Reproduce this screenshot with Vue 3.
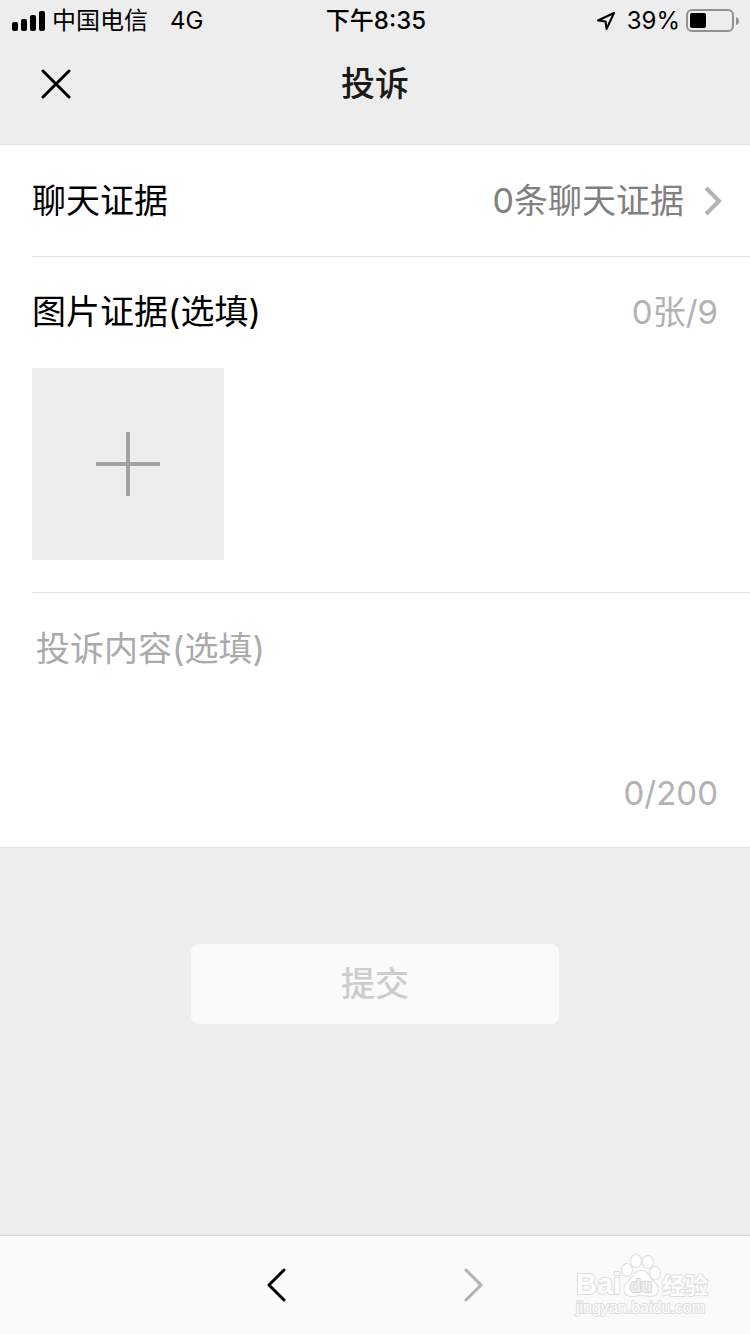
<script setup>
import { ref, computed } from 'vue'
const MAX_PHOTOS = 9, MAX_CHARS = 200
const chats = ref([]), photos = ref([]), content = ref('')
const canSubmit = computed(() => chats.value.length > 0 || photos.value.length > 0 || content.value.trim() !== '')
const battery = 39
function onPick(e){ photos.value = [...photos.value, ...e.target.files].slice(0, MAX_PHOTOS) }
</script>

<template>
  <div class="page">
    <header class="top">
      <div class="status">
        <div class="status-side">
          <svg class="signal" viewBox="0 0 34 20" aria-hidden="true">
            <rect x="0" y="11" width="6" height="9" rx="2"/>
            <rect x="9" y="8" width="6" height="12" rx="2"/>
            <rect x="18" y="4" width="6" height="16" rx="2"/>
            <rect x="27" y="0" width="6" height="20" rx="2"/>
          </svg>
          <span class="carrier">中国电信</span>
          <span>4G</span>
        </div>
        <div class="clock">下午8:35</div>
        <div class="status-side is-right">
          <svg class="locate" viewBox="0 0 20 20" fill="none" aria-hidden="true">
            <path d="M2 9.5L18 2L10.5 18L9.6 10.4Z" stroke="currentColor" stroke-width="2" stroke-linejoin="round"/>
          </svg>
          <span>{{ battery }}%</span>
          <svg class="battery" viewBox="0 0 54 24" aria-hidden="true">
            <rect x="1" y="1" width="46" height="21" rx="5" fill="none" stroke="#919191" stroke-width="2"/>
            <rect x="4" y="4" :width="Math.round(battery * 0.41)" height="15" rx="2"/>
            <path d="M50 8Q53 9 53 12Q53 15 50 16Z" fill="#919191"/>
          </svg>
        </div>
      </div>
      <div class="nav">
        <button class="icon-btn close" type="button" aria-label="关闭">
          <svg viewBox="0 0 30 30" fill="none"><path d="M2 2L28 28M28 2L2 28" stroke="currentColor" stroke-width="3" stroke-linecap="round"/></svg>
        </button>
        <h1 class="title">投诉</h1>
      </div>
    </header>

    <form id="complaint" class="form" @submit.prevent>
      <button class="cell" type="button">
        <span>聊天证据</span>
        <span class="cell-value">{{ chats.length }}条聊天证据
          <svg class="arrow" viewBox="0 0 18 30" fill="none" aria-hidden="true"><path d="M2 2L15 15L2 28" stroke="#b2b2b2" stroke-width="4"/></svg>
        </span>
      </button>

      <section class="photos">
        <div class="photos-head">
          <label for="photo">图片证据(选填)</label>
          <span class="count">{{ photos.length }}张/{{ MAX_PHOTOS }}</span>
        </div>
        <label class="adder">
          <input id="photo" class="file" type="file" accept="image/*" multiple @change="onPick">
          <svg viewBox="0 0 64 64" aria-hidden="true"><path d="M0 32H64M32 0V64" stroke="#a3a3a3" stroke-width="4"/></svg>
        </label>
      </section>

      <section class="content">
        <textarea v-model="content" class="textarea" aria-label="投诉内容" placeholder="投诉内容(选填)" :maxlength="MAX_CHARS" />
        <div class="count">{{ content.length }}/{{ MAX_CHARS }}</div>
      </section>
    </form>

    <div class="actions">
      <button class="submit" type="submit" form="complaint" :disabled="!canSubmit">提交</button>
    </div>

    <footer class="toolbar">
      <button class="icon-btn step" type="button" aria-label="后退">
        <svg viewBox="0 0 20 36" fill="none"><path d="M18 3L3 18L18 33" stroke="currentColor" stroke-width="3" stroke-linecap="round" stroke-linejoin="round"/></svg>
      </button>
      <button class="icon-btn step" type="button" aria-label="前进" disabled>
        <svg viewBox="0 0 20 36" fill="none"><path d="M2 3L17 18L2 33" stroke="currentColor" stroke-width="3" stroke-linecap="round" stroke-linejoin="round"/></svg>
      </button>
      <div class="mark">
        <svg viewBox="0 0 144 66" role="img" aria-label="Baidu经验">
          <g class="outline">
            <text x="4" y="40" font-size="29">Bai</text>
            <ellipse cx="55" cy="16" rx="5" ry="6"/>
            <ellipse cx="64" cy="7" rx="5" ry="6"/>
            <ellipse cx="76" cy="8" rx="5" ry="6"/>
            <ellipse cx="83" cy="19" rx="5" ry="6"/>
            <path d="M69 17C62 17 61 24 56 28C50 33 52 42 59 42C63 42 65 41 69 41C73 41 75 42 79 42C87 42 88 33 82 28C77 24 76 17 69 17Z"/>
            <text class="du" x="58" y="38" font-size="18">du</text>
            <text x="90" y="40" font-size="23">经验</text>
            <text class="site" x="4" y="59" font-size="16">jingyan.baidu.com</text>
          </g>
        </svg>
      </div>
    </footer>
  </div>
</template>

<style>
body{ background:#ededed; }
</style>

<style scoped>
.page{ min-height:100vh; display:flex; flex-direction:column; background:#ededed; color:#000; font-family:Inter,"Noto Sans CJK SC",sans-serif; font-size:34px; line-height:48px; }
button{ font:inherit; color:inherit; background:none; border:0; padding:0; cursor:pointer; }
svg{ display:block; }

.top{ border-bottom:1px solid #e2e2e2; }
.status{ display:grid; grid-template-columns:1fr auto 1fr; align-items:center; height:42px; padding:0 10px 0 12px; font-size:24px; line-height:42px; }
.status-side{ display:flex; align-items:center; }
.status-side.is-right{ justify-content:flex-end; }
.signal{ width:34px; height:20px; margin-right:6px; }
.carrier{ margin-right:22px; }
.clock{ font-weight:500; }
.locate{ width:20px; height:20px; margin-right:11px; }
.battery{ width:54px; height:24px; margin-left:6px; }

.nav{ display:grid; grid-template-columns:72px 1fr 72px; align-items:center; height:84px; padding:0 20px 18px; }
.icon-btn{ display:flex; align-items:center; justify-content:center; }
.close svg{ width:30px; height:30px; }
.title{ margin:0; font-size:34px; font-weight:500; text-align:center; color:#1a1a1a; }

.form{ background:#fff; border-bottom:1px solid #e2e2e2; }
.cell{ display:flex; align-items:center; justify-content:space-between; width:100%; padding:32px 28px 31px 32px; text-align:left; }
.cell-value{ display:flex; align-items:center; gap:20px; color:#808080; }
.arrow{ width:18px; height:30px; }
.photos,.content{ margin-left:32px; padding:31px 32px 32px 0; border-top:1px solid #e2e2e2; }
.photos-head{ display:flex; justify-content:space-between; margin-bottom:32px; }
.count{ color:#b2b2b2; font-size:33px; text-align:right; }
.adder{ position:relative; display:flex; align-items:center; justify-content:center; width:192px; height:192px; background:#ededed; cursor:pointer; }
.adder svg{ width:64px; height:64px; }
.file{ position:absolute; inset:0; width:100%; height:100%; opacity:0; cursor:pointer; }
.content{ padding:32px 32px 30px 0; }
.textarea{ display:block; box-sizing:border-box; width:100%; height:144px; padding:0 4px; border:0; outline:none; resize:none; background:none; color:#000; font:inherit; }
.textarea::placeholder{ color:#aaa; opacity:1; }

.actions{ flex:1; padding:96px 32px; text-align:center; }
.submit{ width:368px; max-width:100%; height:80px; border-radius:8px; background:#07c160; color:#fff; font-weight:500; }
.submit:disabled{ background:#fafafa; color:#cdcdcd; cursor:not-allowed; }

.toolbar{ position:relative; display:flex; justify-content:center; height:98px; background:#fafafa; border-top:1px solid #d2d2d2; }
.step{ width:198px; }
.step:disabled{ color:#b2b2b2; cursor:default; }
.step svg{ width:20px; height:36px; }
.mark{ position:absolute; right:34px; bottom:14px; width:144px; pointer-events:none; }
.outline{ fill:#fff; stroke:#dedede; stroke-width:2; stroke-linejoin:round; paint-order:stroke; font-family:"Liberation Sans","Noto Sans CJK SC",sans-serif; font-weight:700; }
.du{ fill:#f0f0f0; stroke:#d4d4d4; }
.site{ font-weight:400; }
</style>
